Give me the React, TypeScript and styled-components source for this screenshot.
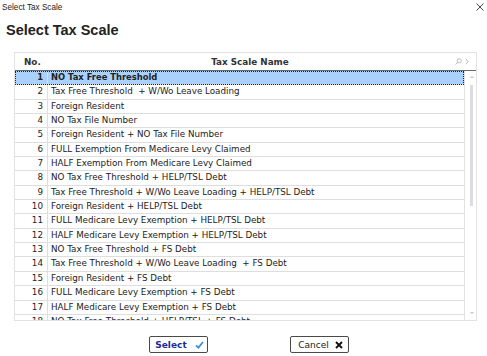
import React from "react";
import styled, { createGlobalStyle } from "styled-components";

const Global = createGlobalStyle`
  html, body { margin: 0; padding: 0; background: #ffffff; }
  body { width: 487px; height: 356px; overflow: hidden; }
`;

const Window = styled.div`
  width: 487px;
  height: 356px;
  background: #fff;
  display: flex;
  flex-direction: column;
`;

const TitleBar = styled.div`
  height: 14px;
  display: flex;
  align-items: center;
  justify-content: space-between;
  padding: 0 3px 0 2px;
  font-family: "Liberation Sans", Arial, sans-serif;
  font-size: 8.2px;
  color: #222;
`;

const Heading = styled.h1`
  margin: 7px 0 0 6px;
  height: 18px;
  line-height: 18px;
  font-family: "Liberation Sans", Arial, sans-serif;
  font-size: 14.5px;
  font-weight: bold;
  color: #222;
`;

const Grid = styled.div`
  margin: 13px 0 0 14px;
  width: 461px;
  height: 267px;
  border: 1px solid #e2e2e2;
  display: flex;
  flex-direction: column;
  overflow: hidden;
  font-family: "DejaVu Sans", Verdana, sans-serif;
`;

const HeaderRow = styled.div`
  height: 17px;
  flex: none;
  display: grid;
  grid-template-columns: 33px 1fr 24px;
  align-items: center;
  border-bottom: 1px solid #6a6a6a;
  font-size: 8.8px;
  font-weight: bold;
  color: #333;
`;

const HeadCell = styled.div<{ $align?: string }>`
  text-align: ${(p) => p.$align || "left"};
  padding-left: ${(p) => (p.$align === "center" ? "0" : "9px")};
`;

const HeadIcons = styled.div`
  display: flex;
  align-items: center;
  gap: 3px;
  padding-left: 3px;
`;

const Body = styled.div`
  flex: 1;
  display: flex;
  min-height: 0;
`;

const Rows = styled.div`
  width: 449px;
  flex: none;
  overflow: hidden;
`;

const Row = styled.div<{ $selected?: boolean }>`
  height: 13.35px;
  display: grid;
  grid-template-columns: 33px 1fr;
  align-items: stretch;
  box-sizing: content-box;
  border-bottom: 1px solid #dedede;
  font-size: ${(p) => (p.$selected ? "8.4px" : "8.75px")};
  font-weight: ${(p) => (p.$selected ? "bold" : "normal")};
  color: #222;
  background: ${(p) => (p.$selected ? "#a9d1fb" : "#fff")};
  outline: ${(p) => (p.$selected ? "1px dotted #222" : "none")};
  outline-offset: -1px;
  line-height: 13.35px;
  white-space: pre;
`;

const NumCell = styled.div`
  text-align: right;
  padding-right: 4px;
  border-right: 1px solid #dedede;
`;

const NameCell = styled.div`
  padding-left: 3px;
  overflow: hidden;
`;

const Scrollbar = styled.div`
  flex: 1;
  border-left: 1px solid #e2e2e2;
  position: relative;
`;

const Thumb = styled.div`
  position: absolute;
  top: 14px;
  left: 5px;
  width: 3px;
  height: 121px;
  background: #dcdce0;
`;

const Arrow = styled.div<{ $down?: boolean }>`
  position: absolute;
  left: 5px;
  ${(p) => (p.$down ? "bottom: 6px;" : "top: 5px;")}
  width: 0;
  height: 0;
  border-left: 2px solid transparent;
  border-right: 2px solid transparent;
  ${(p) =>
    p.$down ? "border-top: 2px solid #c4c4c4;" : "border-bottom: 2px solid #c4c4c4;"}
`;

const Footer = styled.div`
  display: flex;
  gap: 82px;
  padding-left: 149px;
  margin-top: 15px;
`;

const Button = styled.button<{ $primary?: boolean }>`
  width: 59px;
  height: 17px;
  box-sizing: border-box;
  border: 1px solid #4a4a4a;
  border-radius: 2px;
  background: #fff;
  display: flex;
  align-items: center;
  justify-content: center;
  gap: ${(p) => (p.$primary ? "8px" : "6px")};
  padding: 0 0 0 2px;
  font-family: "DejaVu Sans", Verdana, sans-serif;
  font-size: 9px;
  font-weight: ${(p) => (p.$primary ? "bold" : "normal")};
  color: ${(p) => (p.$primary ? "#1b2a9a" : "#222")};
`;

const names = [
  "NO Tax Free Threshold",
  "Tax Free Threshold  + W/Wo Leave Loading",
  "Foreign Resident",
  "NO Tax File Number",
  "Foreign Resident + NO Tax File Number",
  "FULL Exemption From Medicare Levy Claimed",
  "HALF Exemption From Medicare Levy Claimed",
  "NO Tax Free Threshold + HELP/TSL Debt",
  "Tax Free Threshold + W/Wo Leave Loading + HELP/TSL Debt",
  "Foreign Resident + HELP/TSL Debt",
  "FULL Medicare Levy Exemption + HELP/TSL Debt",
  "HALF Medicare Levy Exemption + HELP/TSL Debt",
  "NO Tax Free Threshold + FS Debt",
  "Tax Free Threshold + W/Wo Leave Loading  + FS Debt",
  "Foreign Resident + FS Debt",
  "FULL Medicare Levy Exemption + FS Debt",
  "HALF Medicare Levy Exemption + FS Debt",
  "NO Tax Free Threshold + HELP/TSL + FS Debt",
];

export default function App() {
  return (
    <Window>
      <Global />
      <TitleBar>
        <span>Select Tax Scale</span>
        <svg width="8" height="8" viewBox="0 0 8 8">
          <path d="M0.5 0.5 L7.5 7.5 M7.5 0.5 L0.5 7.5" stroke="#333" strokeWidth="0.9" />
        </svg>
      </TitleBar>
      <Heading>Select Tax Scale</Heading>
      <Grid>
        <HeaderRow>
          <HeadCell>No.</HeadCell>
          <HeadCell $align="center">Tax Scale Name</HeadCell>
          <HeadIcons>
            <svg width="7" height="7" viewBox="0 0 7 7">
              <circle cx="4.2" cy="2.8" r="2.1" fill="none" stroke="#aaa" strokeWidth="0.8" />
              <path d="M2.7 4.3 L0.6 6.4" stroke="#aaa" strokeWidth="0.9" />
            </svg>
            <svg width="4" height="7" viewBox="0 0 4 7">
              <path d="M0.8 0.8 L3.2 3.5 L0.8 6.2" fill="none" stroke="#aaa" strokeWidth="0.8" />
            </svg>
          </HeadIcons>
        </HeaderRow>
        <Body>
          <Rows>
            {names.map((n, i) => (
              <Row key={i} $selected={i === 0}>
                <NumCell>{i + 1}</NumCell>
                <NameCell>{n}</NameCell>
              </Row>
            ))}
          </Rows>
          <Scrollbar>
            <Arrow />
            <Thumb />
            <Arrow $down />
          </Scrollbar>
        </Body>
      </Grid>
      <Footer>
        <Button $primary>
          <span>Select</span>
          <svg width="9" height="8" viewBox="0 0 9 8">
            <path d="M1 4.4 L3.4 6.6 L8 1" fill="none" stroke="#3b8fe0" strokeWidth="1.8" />
          </svg>
        </Button>
        <Button>
          <span>Cancel</span>
          <svg width="8" height="8" viewBox="0 0 8 8">
            <path d="M1 1 L7 7 M7 1 L1 7" stroke="#111" strokeWidth="1.9" />
          </svg>
        </Button>
      </Footer>
    </Window>
  );
}
